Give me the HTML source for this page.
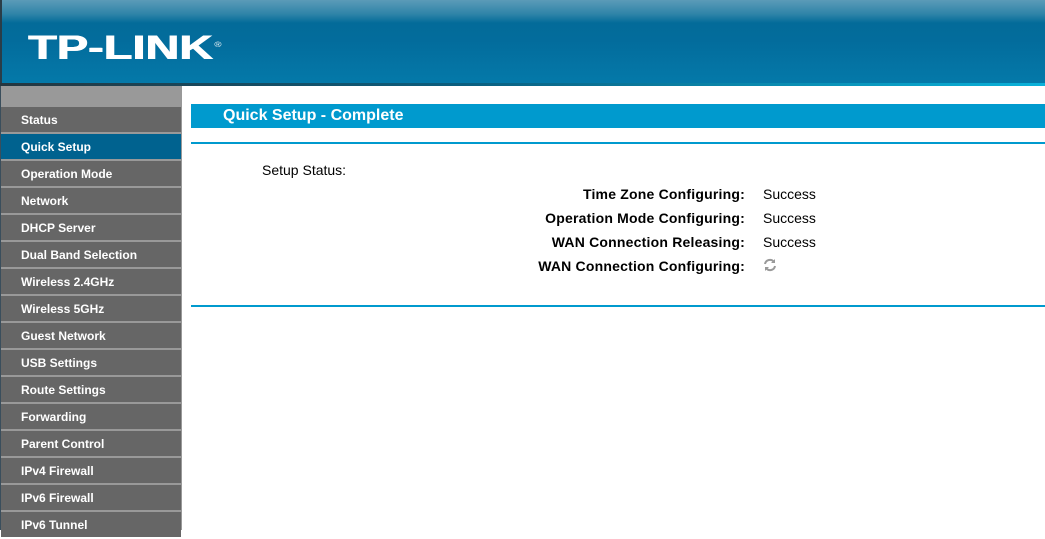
<!DOCTYPE html>
<html><head><style>
body{margin:0;width:1045px;height:530px;overflow:hidden;background:#fff;font-family:"Liberation Sans",Arial,sans-serif;position:relative}
#hd{position:absolute;left:0;top:0;width:1045px;height:83px;background:linear-gradient(#5b9bb8 0px,#2f84a8 14px,#036b99 23px,#036c9c 40px,#0479a9 83px);border-left:2px solid #2a3d48;box-sizing:border-box}
#hl{position:absolute;left:0;top:83px;width:1045px;height:3px;background:linear-gradient(90deg,#25363f,#0a5f80 45%,#0ab2da)}
#logo{position:absolute;left:28px;top:31px;color:#fff;font-weight:bold;font-size:34px;letter-spacing:0;transform:scaleX(1.38);transform-origin:left;line-height:34px;text-shadow:0.6px 0 0 #fff,-0.3px 0 0 #fff}
#logo sup{font-size:7px;vertical-align:top;position:relative;top:-2px;font-weight:normal;text-shadow:none;margin-left:1px}
#sb{position:absolute;left:0;top:86px;width:182px;height:444px;background:#999;border-left:1px solid #3a4e5c;box-sizing:border-box}
.it{position:absolute;left:0;width:180px;height:25px;background:#666;color:#fff;font-weight:bold;font-size:12px;line-height:27px;padding-left:20px;box-sizing:border-box}
.it.sel{background:#00628f}
#tb{position:absolute;left:191px;top:104px;width:854px;height:24px;background:#009ace;color:#fff;font-weight:bold;font-size:16px;line-height:24px;padding-left:32px;box-sizing:border-box}
.ln{position:absolute;left:191px;width:854px;height:2px;background:#009ace}
.t{position:absolute;font-size:14px;color:#000}
.r{right:300px;font-weight:bold;text-align:right;letter-spacing:0.2px}
</style></head><body>
<div id="hd"></div><div id="hl"></div>
<div id="logo">TP-LINK<sup>®</sup></div>
<div id="sb">
<div class="it" style="top:21px">Status</div>
<div class="it sel" style="top:48px">Quick Setup</div>
<div class="it" style="top:75px">Operation Mode</div>
<div class="it" style="top:102px">Network</div>
<div class="it" style="top:129px">DHCP Server</div>
<div class="it" style="top:156px">Dual Band Selection</div>
<div class="it" style="top:183px">Wireless 2.4GHz</div>
<div class="it" style="top:210px">Wireless 5GHz</div>
<div class="it" style="top:237px">Guest Network</div>
<div class="it" style="top:264px">USB Settings</div>
<div class="it" style="top:291px">Route Settings</div>
<div class="it" style="top:318px">Forwarding</div>
<div class="it" style="top:345px">Parent Control</div>
<div class="it" style="top:372px">IPv4 Firewall</div>
<div class="it" style="top:399px">IPv6 Firewall</div>
<div class="it" style="top:426px">IPv6 Tunnel</div>
</div>
<div id="tb">Quick Setup - Complete</div>
<div class="ln" style="top:142px"></div>
<div class="ln" style="top:305px"></div>
<div class="t" style="left:262px;top:162px">Setup Status:</div>
<div class="t r" style="top:186px">Time Zone Configuring:</div>
<div class="t r" style="top:210px">Operation Mode Configuring:</div>
<div class="t r" style="top:234px">WAN Connection Releasing:</div>
<div class="t r" style="top:258px">WAN Connection Configuring:</div>
<div class="t" style="left:763px;top:186px">Success</div>
<div class="t" style="left:763px;top:210px">Success</div>
<div class="t" style="left:763px;top:234px">Success</div>
<svg style="position:absolute;left:762px;top:258px" width="16" height="14" viewBox="0 0 16 14"><path d="M3 6a5 5 0 0 1 9-2" stroke="#999" stroke-width="2" fill="none"/><path d="M13 1v4h-4z" fill="#999"/><path d="M13 8a5 5 0 0 1-9 2" stroke="#999" stroke-width="2" fill="none"/><path d="M3 13v-4h4z" fill="#999"/></svg>
</body></html>
